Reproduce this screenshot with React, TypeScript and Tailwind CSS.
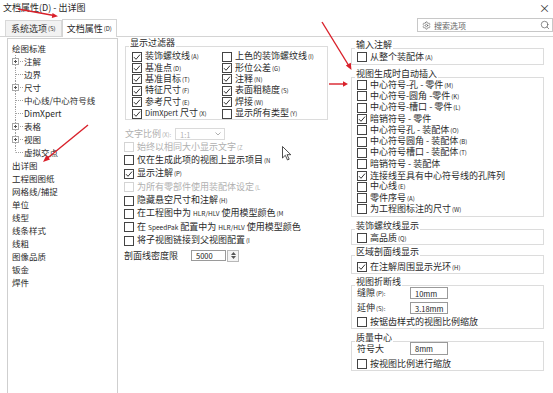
import React from "react";
import { Settings, Search } from "lucide-react";

function Box({ checked, disabled }: { checked?: boolean; disabled?: boolean }) {
  return (
    <span
      className={`inline-flex w-[10px] h-[10px] shrink-0 items-center justify-center border bg-white ${
        disabled ? "border-[#d4d4d4]" : "border-[#444]"
      }`}
    >
      {checked && (
        <svg width="8" height="8" viewBox="0 0 8 8">
          <path d="M1 4.2 L3 6.3 L7 1.6" fill="none" stroke="#333" strokeWidth="1" />
        </svg>
      )}
    </span>
  );
}

function K({ k }: { k: string }) {
  return <span className="text-[6px] ml-[1px]">{k}</span>;
}

function Cb({
  checked,
  disabled,
  children,
  className = "",
}: {
  checked?: boolean;
  disabled?: boolean;
  children: React.ReactNode;
  className?: string;
}) {
  return (
    <div
      className={`flex items-center gap-[3px] whitespace-nowrap leading-[10px] ${
        disabled ? "text-[#b0b0b0]" : "text-[#2a2a2a]"
      } ${className}`}
    >
      <Box checked={checked} disabled={disabled} />
      <span className="leading-[10px]">{children}</span>
    </div>
  );
}

function GLabel({ children, className = "" }: { children: React.ReactNode; className?: string }) {
  return (
    <div className={`relative z-10 w-fit bg-white px-[1px] h-[12px] leading-[12px] text-[#2a2a2a] ${className}`}>
      {children}
    </div>
  );
}

function Gutter({ exp, last }: { exp?: boolean; last?: boolean }) {
  return (
    <svg width="12" height="13" className="shrink-0">
      <line x1="3.5" y1="0" x2="3.5" y2={last ? 6.5 : 13} stroke="#a0a0a0" strokeDasharray="1 1" />
      <line x1="4" y1="6.5" x2="11" y2="6.5" stroke="#a0a0a0" strokeDasharray="1 1" />
      {exp && (
        <>
          <rect x="0.5" y="3.5" width="6" height="6" fill="white" stroke="#a8a8a8" />
          <path d="M2 6.5h3M3.5 5v3" stroke="#555" />
        </>
      )}
    </svg>
  );
}

function Input({ value, w = "w-[38px]", h = "h-[12px]" }: { value: string; w?: string; h?: string }) {
  return (
    <div className={`${w} ${h} border border-[#9a9a9a] bg-white pl-[4px] flex items-center text-[7.5px] leading-[9px] text-[#222]`}>
      {value}
    </div>
  );
}

export default function App() {
  const treeChildren: { t: string; exp?: boolean; last?: boolean }[] = [
    { t: "注解", exp: true },
    { t: "边界" },
    { t: "尺寸", exp: true },
    { t: "中心线/中心符号线" },
    { t: "DimXpert" },
    { t: "表格", exp: true },
    { t: "视图", exp: true },
    { t: "虚拟交点", last: true },
  ];
  const treeTop = ["出详图", "工程图图纸", "网格线/捕捉", "单位", "线型", "线条样式", "线粗", "图像品质", "钣金", "焊件"];

  return (
    <div className="relative w-[553px] h-[393px] overflow-hidden bg-white text-[9px] leading-[11px] text-[#2a2a2a] font-['Noto_Sans_CJK_SC','Noto_Sans',sans-serif]">
      {/* title */}
      <div className="h-[16px] flex items-center justify-between pl-[3px] pr-[3px]">
        <span className="leading-[12px]">文档属性(D) - 出详图</span>
        <span className="text-[11px] text-[#333] leading-[12px]">×</span>
      </div>

      {/* tabs */}
      <div className="h-[21px] flex items-end border-b border-[#d4d4d4] pl-[5px]">
        <div className="h-[16px] px-[5px] flex items-center border border-b-0 border-[#d8d8d8] bg-[#f2f2f2] text-[#333]">
          系统选项<K k="(S)" />
        </div>
        <div className="h-[18px] px-[4px] -mb-[1px] flex items-center border border-b-0 border-[#d4d4d4] bg-white">
          文档属性<K k="(D)" />
        </div>
        <div className="ml-auto self-start mt-[2px] w-[136px] h-[14px] border border-[#c8c8c8] flex items-center pl-[4px] pr-[2px] text-[#666]">
          <Settings size={9} strokeWidth={1.6} className="text-[#555]" />
          <span className="ml-[3px] text-[8px]">搜索选项</span>
          <Search size={10} strokeWidth={1.6} className="ml-auto text-[#555]" />
        </div>
      </div>

      {/* body */}
      <div className="flex">
        {/* tree */}
        <div className="ml-[7px] mt-[1px] w-[111px] h-[360px] shrink-0 border border-b-0 border-[#cfcfcf] pt-[2.5px] text-[8.5px]">
          <div className="h-[13px] leading-[13px] pl-[4px]">绘图标准</div>
          {treeChildren.map((c) => (
            <div key={c.t} className="h-[13px] leading-[13px] pl-[4px] flex items-center">
              <Gutter exp={c.exp} last={c.last} />
              <span>{c.t}</span>
            </div>
          ))}
          {treeTop.map((t) => (
            <div key={t} className="h-[13px] leading-[13px] pl-[4px]">
              {t}
            </div>
          ))}
        </div>

        {/* middle column */}
        <div className="w-[217px] shrink-0">
          <div className="ml-[7px] w-[203px]">
            <GLabel className="ml-[4px]">显示过滤器</GLabel>
            <div className="-mt-[3px] border border-[#dcdcdc] pt-[4px] pl-[6px] grid grid-cols-[90px_1fr] auto-rows-[11.4px]">
              <Cb checked>装饰螺纹线<K k="(A)" /></Cb>
              <Cb>上色的装饰螺纹线<K k="(I)" /></Cb>
              <Cb checked>基准点<K k="(D)" /></Cb>
              <Cb checked>形位公差<K k="(G)" /></Cb>
              <Cb checked>基准目标<K k="(T)" /></Cb>
              <Cb checked>注释<K k="(N)" /></Cb>
              <Cb checked>特征尺寸<K k="(F)" /></Cb>
              <Cb checked>表面粗糙度<K k="(S)" /></Cb>
              <Cb checked>参考尺寸<K k="(E)" /></Cb>
              <Cb checked>焊接<K k="(W)" /></Cb>
              <Cb checked><span className="text-[7.5px]">DimXpert</span> 尺寸<K k="(X)" /></Cb>
              <Cb>显示所有类型<K k="(Y)" /></Cb>
            </div>
          </div>

          <div className="ml-[7px] mt-[8px] h-[12px] flex items-center text-[#b0b0b0]">
            <span className="w-[50px]">文字比例<K k="(X):" /></span>
            <div className="w-[50px] h-[12px] border border-[#dadada] flex items-center pl-[4px] pr-[3px] text-[7.5px]">
              1:1
              <svg width="6" height="4" viewBox="0 0 6 4" className="ml-auto">
                <path d="M0.5 0.5 L3 3 L5.5 0.5" fill="none" stroke="#b0b0b0" />
              </svg>
            </div>
          </div>

          <div className="ml-[6px] grid auto-rows-[13.4px]">
            <Cb disabled>始终以相同大小显示文字<K k="(Z" /></Cb>
            <Cb>仅在生成此项的视图上显示项目<K k="(N" /></Cb>
            <Cb checked>显示注解<K k="(P)" /></Cb>
            <Cb disabled>为所有零部件使用装配体设定<K k="(L" /></Cb>
            <Cb>隐藏悬空尺寸和注解<K k="(H)" /></Cb>
            <Cb>
              在工程图中为 <span className="text-[6.5px]">HLR/HLV</span> 使用模型颜色<K k="(M" />
            </Cb>
            <Cb>
              在 <span className="text-[6.5px]">SpeedPak</span> 配置中为 <span className="text-[6.5px]">HLR/HLV</span> 使用模型颜色
            </Cb>
            <Cb>将子视图链接到父视图配置<K k="(I" /></Cb>
          </div>

          <div className="ml-[6px] mt-[2px] h-[13px] flex items-center">
            <span className="w-[67px]">剖面线密度限</span>
            <Input value="5000" w="w-[35px]" h="h-[11px]" />
            <div className="ml-[1px] w-[12px] h-[12px] border border-[#b8b8b8] bg-[#f4f4f4] flex flex-col items-center justify-center gap-[1px]">
              <svg width="5" height="3" viewBox="0 0 5 3"><path d="M0 3 L2.5 0 L5 3Z" fill="#555" /></svg>
              <svg width="5" height="3" viewBox="0 0 5 3"><path d="M0 0 L2.5 3 L5 0Z" fill="#555" /></svg>
            </div>
          </div>
        </div>

        {/* right column */}
        <div className="pl-[16px] w-[209px] shrink-0">
          <div className="mt-[2px]">
            <GLabel className="ml-[4px]">输入注解</GLabel>
            <div className="-mt-[3px] border border-[#dcdcdc] pt-[2px] pb-[1px] pl-[5px]">
              <Cb className="h-[12px]">从整个装配体<K k="(A)" /></Cb>
            </div>
          </div>

          <div className="mt-[3px]">
            <GLabel className="ml-[4px]">视图生成时自动插入</GLabel>
            <div className="-mt-[3px] border border-[#dcdcdc] pt-[1.5px] pb-[1px] pl-[5px] grid auto-rows-[11.3px]">
              <Cb>中心符号-孔 - 零件<K k="(M)" /></Cb>
              <Cb>中心符号-圆角 -零件<K k="(K)" /></Cb>
              <Cb>中心符号-槽口 - 零件<K k="(L)" /></Cb>
              <Cb checked>暗销符号 - 零件</Cb>
              <Cb>中心符号孔 - 装配体<K k="(O)" /></Cb>
              <Cb>中心符号圆角 - 装配体<K k="(B)" /></Cb>
              <Cb>中心符号槽口 - 装配体<K k="(T)" /></Cb>
              <Cb>暗销符号 - 装配体</Cb>
              <Cb checked>连接线至具有中心符号线的孔阵列</Cb>
              <Cb>中心线<K k="(E)" /></Cb>
              <Cb>零件序号<K k="(A)" /></Cb>
              <Cb>为工程图标注的尺寸<K k="(W)" /></Cb>
            </div>
          </div>

          <div className="mt-[3px]">
            <GLabel className="ml-[4px]">装饰螺纹线显示</GLabel>
            <div className="-mt-[3px] border border-[#dcdcdc] pt-[2px] pl-[5px]">
              <Cb className="h-[12px]">高品质<K k="(Q)" /></Cb>
            </div>
          </div>

          <div className="mt-[1px]">
            <GLabel className="ml-[4px]">区域剖面线显示</GLabel>
            <div className="-mt-[3px] border border-[#dcdcdc] pt-[5px] pl-[5px]">
              <Cb checked className="h-[12px]">在注解周围显示光环<K k="(H)" /></Cb>
            </div>
          </div>

          <div className="mt-[2px]">
            <GLabel className="ml-[4px]">视图折断线</GLabel>
            <div className="-mt-[3px] border border-[#dcdcdc] pt-[1px] pl-[5px]">
              <div className="h-[12px] flex items-center">
                <span className="w-[53px]">缝隙<K k="(P):" /></span>
                <Input value="10mm" />
              </div>
              <div className="mt-[3px] h-[12px] flex items-center">
                <span className="w-[53px]">延伸<K k="(S):" /></span>
                <Input value="3.18mm" />
              </div>
              <Cb className="mt-[2px] h-[12px]">按锯齿样式的视图比例缩放</Cb>
            </div>
          </div>

          <div className="mt-[3px]">
            <GLabel className="ml-[4px]">质量中心</GLabel>
            <div className="-mt-[3px] border border-[#dcdcdc] pl-[5px]">
              <div className="h-[13px] flex items-center">
                <span className="w-[53px]">符号大</span>
                <Input value="8mm" h="h-[13px]" />
              </div>
              <Cb className="mt-[3px] h-[12px]">按视图比例进行缩放</Cb>
            </div>
          </div>
        </div>
      </div>

      {/* mouse cursor */}
      <svg width="10" height="15" viewBox="0 0 10 15" className="absolute left-[282px] top-[146px]">
        <path d="M0.5 0.5 L0.5 12 L3.3 9.3 L5.5 14 L7.2 13.2 L5 8.7 L8.8 8.7 Z" fill="white" stroke="#222" strokeWidth="0.8" />
      </svg>

      {/* red annotation arrows */}
      <svg width="553" height="393" className="absolute left-0 top-0 pointer-events-none">
        <g stroke="#d9202a" strokeWidth="1.4" fill="#d9202a">
          <line x1="18" y1="9" x2="54" y2="15.5" />
          <polygon points="58,16.3 52.5,13 51.8,18" stroke="none" />
          <line x1="88" y1="125" x2="47" y2="158.5" />
          <polygon points="43,162 46.5,155 50,159.5" stroke="none" />
          <line x1="322" y1="22" x2="349" y2="66" />
          <polygon points="351.5,70 345.8,65.5 350.8,62.8" stroke="none" />
          <line x1="329" y1="84" x2="344" y2="84" />
          <polygon points="348,84 343,81.3 343,86.7" stroke="none" />
        </g>
      </svg>
    </div>
  );
}
